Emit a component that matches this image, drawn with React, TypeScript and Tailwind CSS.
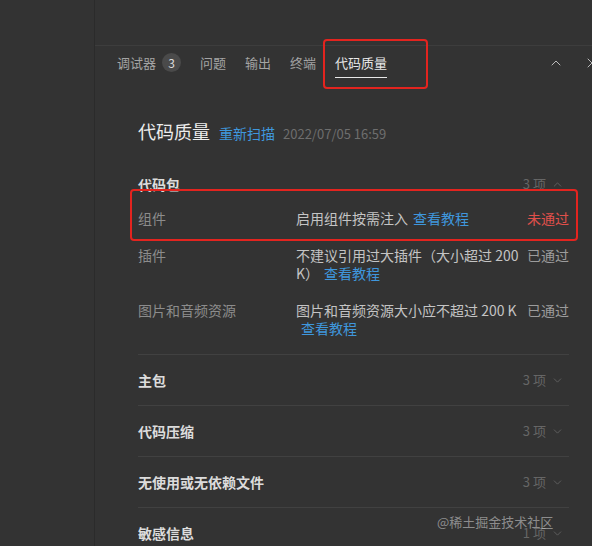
import { ChevronDown, ChevronUp, X } from "lucide-react";

const font = { fontFamily: '"Noto Sans CJK SC", "Noto Sans", sans-serif' };

const tabs = [
  { label: "调试器", badge: "3" },
  { label: "问题" },
  { label: "输出" },
  { label: "终端" },
  { label: "代码质量", active: true },
];

// each desc is split into its visual lines; the link sits at the end of the last one
const rows = [
  {
    name: "组件",
    lines: ["启用组件按需注入"],
    status: "未通过",
    failed: true,
  },
  {
    name: "插件",
    lines: ["不建议引用过大插件（大小超过 200", "K）"],
    status: "已通过",
  },
  {
    name: "图片和音频资源",
    lines: ["图片和音频资源大小应不超过 200 K", ""],
    status: "已通过",
  },
];

const sections = [
  { title: "主包", count: "3 项" },
  { title: "代码压缩", count: "3 项" },
  { title: "无使用或无依赖文件", count: "3 项" },
  { title: "敏感信息", count: "1 项" },
];

function Count({ text, open }: { text: string; open?: boolean }) {
  return (
    <div className="flex items-center gap-[5px] pr-[5px] text-[13px] leading-5 text-[#666666]">
      <span>{text}</span>
      {open ? (
        <ChevronUp className="w-[13px] h-[13px]" strokeWidth={1.5} />
      ) : (
        <ChevronDown className="w-[13px] h-[13px]" strokeWidth={1.5} />
      )}
    </div>
  );
}

export default function App() {
  return (
    <div
      className="relative w-[592px] h-[546px] flex overflow-hidden bg-[#333333]"
      style={font}>
      {/* Left sidebar */}
      <div className="w-[95px] h-full shrink-0 bg-[#333333] border-r border-[#2b2b2b]" />

      {/* Right pane */}
      <div className="flex-1 flex flex-col">
        <div className="h-[46px] shrink-0 border-b border-[#3d3d3d]" />

        {/* Tab bar */}
        <div className="h-[33px] shrink-0 flex items-center pl-[22px] pr-[4px] text-[13px] leading-5">
          {tabs.map((t) => (
            <div
              key={t.label}
              className={`relative flex items-center mr-[19px] ${
                t.active ? "text-[#e8e8e8]" : "text-[#a4a4a4]"
              }`}>
              <span>{t.label}</span>
              {t.badge && (
                <span className="ml-[6px] w-[19px] h-[19px] rounded-full bg-[#4a4a4a] text-[#dddddd] text-[12px] flex items-center justify-center">
                  {t.badge}
                </span>
              )}
              {t.active && (
                <span className="absolute left-0 right-0 top-[24px] h-[1.5px] bg-[#e8e8e8]" />
              )}
            </div>
          ))}
          <div className="ml-auto flex items-center gap-[20px] text-[#bbbbbb]">
            <ChevronUp className="w-[16px] h-[16px]" strokeWidth={1.5} />
            <X className="w-[16px] h-[16px] -mr-[12px]" strokeWidth={1.5} />
          </div>
        </div>

        {/* Content */}
        <div className="shrink-0 pl-[43px] pr-[23px] pt-[39px]">
          <div className="flex items-baseline h-[26px]">
            <span className="text-[18px] leading-[26px] text-[#ececec]">
              代码质量
            </span>
            <span className="ml-[9px] text-[14px] text-[#3f97dd]">重新扫描</span>
            <span className="ml-[8px] text-[13px] text-[#6e6e6e]">
              2022/07/05 16:59
            </span>
          </div>

          <div className="mt-[15px]">
            {/* Expanded section */}
            <div className="border-b border-[#414141] pb-[8px]">
              <div className="flex items-center justify-between pt-[15px] pb-[5px]">
                <span className="text-[14px] leading-5 font-bold text-[#dcdcdc]">
                  代码包
                </span>
                <Count text="3 项" open />
              </div>
              {rows.map((r) => (
                <div
                  key={r.name}
                  className="flex py-[9.5px] text-[14px] leading-[18px]">
                  <div className="w-[158px] shrink-0 text-[#8c8c8c]">{r.name}</div>
                  <div className="text-[#c4c4c4] whitespace-nowrap">
                    {r.lines.map((line, i) => (
                      <div key={i}>
                        {line}
                        {i === r.lines.length - 1 && (
                          <span className="ml-[5px] text-[#3f97dd]">查看教程</span>
                        )}
                      </div>
                    ))}
                  </div>
                  <div
                    className={`ml-auto ${
                      r.failed ? "text-[#e0504b]" : "text-[#9c9c9c]"
                    }`}>
                    {r.status}
                  </div>
                </div>
              ))}
            </div>

            {sections.map((s, i) => (
              <div
                key={s.title}
                className={`flex items-center justify-between py-[15px] ${
                  i < sections.length - 1 ? "border-b border-[#414141]" : ""
                }`}>
                <span className="text-[14px] leading-5 font-bold text-[#dcdcdc]">
                  {s.title}
                </span>
                <Count text={s.count} />
              </div>
            ))}
          </div>
        </div>
      </div>

      {/* Annotation boxes */}
      <div className="absolute left-[323px] top-[39px] w-[105px] h-[50px] border-2 border-[#e3241f] rounded-[4px]" />
      <div className="absolute left-[130px] top-[189px] w-[448px] h-[52px] border-2 border-[#e3241f] rounded-[4px]" />

      {/* Watermark */}
      <div className="absolute left-[437px] top-[512px] text-[13px] leading-5 text-white/45">
        @稀土掘金技术社区
      </div>
    </div>
  );
}
